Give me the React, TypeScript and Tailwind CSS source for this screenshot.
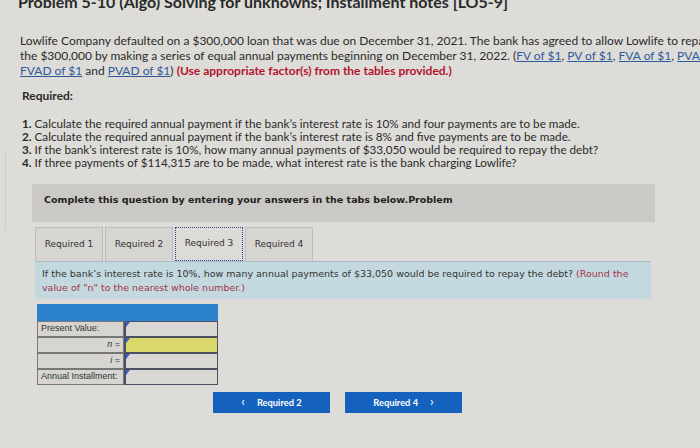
import * as React from 'react';

const sans = { fontFamily: 'Lato, "Open Sans", Arial, sans-serif' };
const arial = { fontFamily: '"Liberation Sans", Arial, sans-serif' };
const verdana = { fontFamily: '"DejaVu Sans", Verdana, sans-serif' };

function Tab({ label, active }: { label: string; active?: boolean }) {
    return (
        <div
            className={
                active
                    ? 'h-[34px] w-[68px] flex items-center justify-center bg-[#dcdbd7] border border-dotted border-[#3a3f8a] text-[9px] text-[#333]'
                    : 'h-[34px] w-[68px] flex items-center justify-center bg-[#d6d5d1] border border-[#bdbcb8] border-b-0 text-[9px] text-[#333]'
            }
            style={verdana}
        >
            {label}
        </div>
    );
}

function Row({ label, right, yellow }: { label: string; right?: boolean; yellow?: boolean }) {
    return (
        <div className="flex h-[16px]">
            <div
                className={
                    'w-[87px] border border-[#777] bg-[#d6d5d1] px-[3px] flex items-center whitespace-nowrap text-[9px] text-[#333] ' +
                    (right ? 'justify-end' : '')
                }
                style={arial}
            >
                {right ? (
                    <span>
                        <i>{label}</i> =
                    </span>
                ) : (
                    label
                )}
            </div>
            <div
                className={
                    'relative flex-1 border border-[#4d5060] border-l-2 ' + (yellow ? 'bg-[#d9d86a]' : 'bg-[#d8d7d3]')
                }
            >
                <div className="absolute left-0 top-0 w-0 h-0 border-t-[5px] border-t-[#2a63c4] border-r-[4px] border-r-transparent" />
            </div>
        </div>
    );
}

export default function App() {
    return (
        <div className="w-[700px] h-[448px] overflow-hidden bg-[#dddcd8] text-[#2b2b2b] relative">
            <div className="absolute left-[5px] top-[150px] w-px h-[80px] bg-[#cfcecb]" />
            <div className="px-[18px] mt-[-10px] text-[16px] font-bold whitespace-nowrap text-[#2a2a2a]" style={sans}>
                Problem 5-10 (Algo) Solving for unknowns; Installment notes [LO5-9]
            </div>

            <div className="pl-[20px] mt-[19px] text-[12px] leading-[15px] whitespace-nowrap" style={sans}>
                <div>
                    Lowlife Company defaulted on a $300,000 loan that was due on December 31, 2021. The bank has agreed to allow Lowlife to repay
                </div>
                <div>
                    the $300,000 by making a series of equal annual payments beginning on December 31, 2022. (
                    <span className="text-[#2e5a9a] underline">FV of $1</span>,{' '}
                    <span className="text-[#2e5a9a] underline">PV of $1</span>,{' '}
                    <span className="text-[#2e5a9a] underline">FVA of $1</span>,{' '}
                    <span className="text-[#2e5a9a] underline">PVA of $1</span>,
                </div>
                <div>
                    <span className="text-[#2e5a9a] underline">FVAD of $1</span> and{' '}
                    <span className="text-[#2e5a9a] underline">PVAD of $1</span>){' '}
                    <span className="font-bold text-[#b3132b]">(Use appropriate factor(s) from the tables provided.)</span>
                </div>
            </div>

            <div className="pl-[22px] mt-[9px] text-[12px] font-bold" style={sans}>
                Required:
            </div>

            <div className="pl-[22px] mt-[12px] text-[11.7px] leading-[13px] whitespace-nowrap" style={sans}>
                <div>
                    <b>1.</b> Calculate the required annual payment if the bank’s interest rate is 10% and four payments are to be made.
                </div>
                <div>
                    <b>2.</b> Calculate the required annual payment if the bank’s interest rate is 8% and five payments are to be made.
                </div>
                <div>
                    <b>3.</b> If the bank’s interest rate is 10%, how many annual payments of $33,050 would be required to repay the debt?
                </div>
                <div>
                    <b>4.</b> If three payments of $114,315 are to be made, what interest rate is the bank charging Lowlife?
                </div>
            </div>

            <div className="ml-[32px] mt-[15px] w-[623px] h-[38px] bg-[#cac9c5] pl-[12px] pt-[9px]">
                <div className="text-[9.5px] font-bold text-[#222]" style={verdana}>
                    Complete this question by entering your answers in the tabs below.Problem
                </div>
            </div>

            <div className="ml-[35px] mt-[5px] flex gap-[2px]">
                <Tab label="Required 1" />
                <Tab label="Required 2" />
                <Tab label="Required 3" active />
                <Tab label="Required 4" />
            </div>

            <div
                className="ml-[35px] w-[616px] h-[38px] bg-[#c4d9df] border-t border-[#a9bcc4] pl-[7px] pt-[5px] text-[9.5px] leading-[14px] text-[#333]"
                style={verdana}
            >
                <div className="whitespace-nowrap">
                    If the bank’s interest rate is 10%, how many annual payments of $33,050 would be required to repay the debt?{' '}
                    <span className="text-[#a3344a]">(Round the</span>
                </div>
                <div className="text-[#a3344a]">value of "n" to the nearest whole number.)</div>
            </div>

            <div className="ml-[37px] mt-[5px] w-[181px]">
                <div className="h-[17px] bg-[#2d82cc]" />
                <Row label="Present Value:" />
                <Row label="n" right yellow />
                <Row label="i" right />
                <Row label="Annual Installment:" />
            </div>

            <div className="ml-[213px] mt-[7px] flex gap-[15px]">
                <div
                    className="w-[117px] h-[21px] bg-[#1462bd] text-white text-[9.3px] font-bold flex items-center justify-center gap-[12px]"
                    style={sans}
                >
                    <span className="text-[13px] font-normal leading-none mt-[-2px]">‹</span>
                    <span>Required 2</span>
                </div>
                <div
                    className="w-[117px] h-[21px] bg-[#1462bd] text-white text-[9.3px] font-bold flex items-center justify-center gap-[12px]"
                    style={sans}
                >
                    <span>Required 4</span>
                    <span className="text-[13px] font-normal leading-none mt-[-2px]">›</span>
                </div>
            </div>
        </div>
    );
}
